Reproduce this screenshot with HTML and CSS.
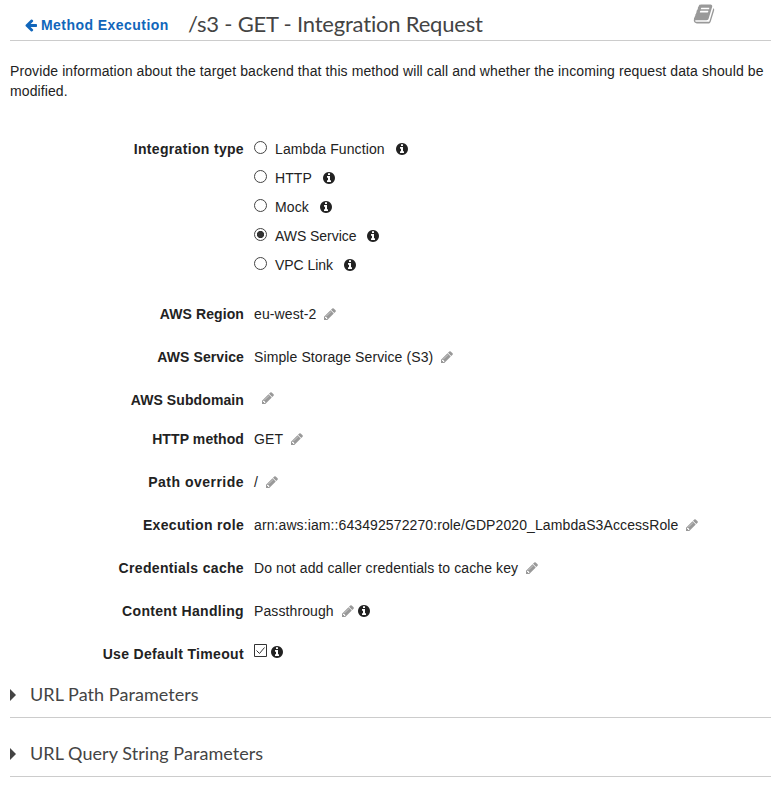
FILE: index.html
```html
<!DOCTYPE html>
<html lang="en">
<head>
<meta charset="utf-8">
<title>Integration Request</title>
<link rel="stylesheet" href="styles.css">
</head>
<body>
<svg class="sprite" aria-hidden="true">
  <symbol id="arrow" viewBox="0 0 1792 1792"><path d="M1664 896v128q0 53-32.5 90.5t-84.5 37.5h-704l293 294q38 36 38 90t-38 90l-75 76q-37 37-90 37-52 0-91-37l-651-652q-37-37-37-90 0-52 37-91l651-650q38-38 91-38 52 0 90 38l75 74q38 38 38 91t-38 91l-293 293h704q52 0 84.5 37.5t32.5 90.5z"/></symbol>
  <symbol id="pencil" viewBox="0 0 1792 1792"><path d="M491 1536l91-91-235-235-91 91v107h128v128h107zm523-928q0-22-22-22-10 0-17 7l-542 542q-7 7-7 17 0 22 22 22 10 0 17-7l542-542q7-7 7-17zm-54-192l416 416-832 832h-416v-416zm683 96q0 53-37 90l-166 166-416-416 166-165q36-38 90-38 53 0 91 38l235 234q37 39 37 91z"/></symbol>
  <symbol id="info" viewBox="0 0 1792 1792"><path d="M1152 1376v-160q0-14-9-23t-23-9h-96v-512q0-14-9-23t-23-9h-320q-14 0-23 9t-9 23v160q0 14 9 23t23 9h96v320h-96q-14 0-23 9t-9 23v160q0 14 9 23t23 9h448q14 0 23-9t9-23zm-128-896v-160q0-14-9-23t-23-9h-192q-14 0-23 9t-9 23v160q0 14 9 23t23 9h192q14 0 23-9t9-23zm640 416q0 209-103 385.5t-279.5 279.5-385.5 103-385.5-103-279.5-279.5-103-385.5 103-385.5 279.5-279.5 385.5-103 385.5 103 279.5 279.5 103 385.5z"/></symbol>
  <symbol id="book" viewBox="0 0 1792 1792"><path d="M1703 478q40 57 18 129l-275 906q-19 64-76.5 107.5t-122.5 43.5h-923q-77 0-148.5-53.5t-99.5-131.5q-24-67-2-127 0-4 3-27t4-37q1-8-3-21.5t-3-19.5q2-11 8-21t16.5-23.5 16.5-23.5q23-38 45-91.5t30-91.5q3-10 .5-30t-.5-28q3-11 17-28t17-23q21-36 42-92t25-90q1-9-2.5-32t.5-28q4-13 22-30.5t22-22.5q19-26 42.5-84.5t27.5-96.5q1-8-3-25.5t-2-26.5q2-8 9-18t18-23 17-21q8-12 16.5-30.5t15-35 16-36 19.5-32 26.5-23.5 36-11.5 47.5 5.5l-1 3q38-9 51-9h761q74 0 114 56t18 130l-274 906q-36 119-71.5 153.5t-128.5 34.5h-869q-27 0-38 15-11 16-1 43 24 70 144 70h923q29 0 56-15.5t35-41.5l300-987q7-22 5-57 38 15 59 43zm-1064 2q-4 13 2 22.5t20 9.5h608q13 0 25.5-9.5t16.5-22.5l21-64q4-13-2-22.5t-20-9.5h-608q-13 0-25.5 9.5t-16.5 22.5zm-83 256q-4 13 2 22.5t20 9.5h608q13 0 25.5-9.5t16.5-22.5l21-64q4-13-2-22.5t-20-9.5h-608q-13 0-25.5 9.5t-16.5 22.5z"/></symbol>
</svg>
<header class="header">
  <a class="back"><svg class="icon"><use href="#arrow"/></svg><span>Method Execution</span></a>
  <h1 class="title">/s3 - GET - Integration Request</h1>
  <svg class="book"><use href="#book"/></svg>
</header>
<p class="intro">Provide information about the target backend that this method will call and whether the incoming request data should be modified.</p>
<main class="form">
  <div class="row row-types">
    <span class="label">Integration type</span>
    <div class="types">
      <div class="type"><i class="radio"></i><span>Lambda Function</span><svg class="icon info"><use href="#info"/></svg></div>
      <div class="type"><i class="radio"></i><span>HTTP</span><svg class="icon info"><use href="#info"/></svg></div>
      <div class="type"><i class="radio"></i><span>Mock</span><svg class="icon info"><use href="#info"/></svg></div>
      <div class="type"><i class="radio checked"></i><span class="caps">AWS Service</span><svg class="icon info"><use href="#info"/></svg></div>
      <div class="type"><i class="radio"></i><span class="caps">VPC Link</span><svg class="icon info"><use href="#info"/></svg></div>
    </div>
  </div>
  <div class="row"><span class="label tight">AWS Region</span><div class="value"><span>eu-west-2</span><svg class="icon pencil"><use href="#pencil"/></svg></div></div>
  <div class="row"><span class="label tight">AWS Service</span><div class="value"><span>Simple Storage Service (S3)</span><svg class="icon pencil"><use href="#pencil"/></svg></div></div>
  <div class="row row-empty"><span class="label tight">AWS Subdomain</span><div class="value"><svg class="icon pencil"><use href="#pencil"/></svg></div></div>
  <div class="row"><span class="label tight">HTTP method</span><div class="value"><span>GET</span><svg class="icon pencil"><use href="#pencil"/></svg></div></div>
  <div class="row"><span class="label wide">Path override</span><div class="value"><span>/</span><svg class="icon pencil"><use href="#pencil"/></svg></div></div>
  <div class="row"><span class="label">Execution role</span><div class="value"><span>arn:aws:iam::643492572270:role/GDP2020_LambdaS3AccessRole</span><svg class="icon pencil"><use href="#pencil"/></svg></div></div>
  <div class="row"><span class="label">Credentials cache</span><div class="value"><span>Do not add caller credentials to cache key</span><svg class="icon pencil"><use href="#pencil"/></svg></div></div>
  <div class="row"><span class="label">Content Handling</span><div class="value"><span>Passthrough</span><svg class="icon pencil"><use href="#pencil"/></svg><svg class="icon"><use href="#info"/></svg></div></div>
  <div class="row row-check"><span class="label">Use Default Timeout</span><div class="value"><svg class="checkbox" viewBox="0 0 13 13"><path d="M.5 .5h12v12H.5zM2.5 6.5l3 3 5-6"/></svg><svg class="icon"><use href="#info"/></svg></div></div>
</main>
<section class="section"><svg class="caret" viewBox="0 0 6 12"><path d="M0 0l6 6-6 6z"/></svg><h2>URL Path Parameters</h2></section>
<section class="section"><svg class="caret" viewBox="0 0 6 12"><path d="M0 0l6 6-6 6z"/></svg><h2>URL Query String Parameters</h2></section>
</body>
</html>
```
FILE: styles.css
```css
* { box-sizing: border-box; }
body {
  margin: 0;
  padding: 0 7px 0 10px;
  background: #fff;
  color: #222;
  font: 14px/20px "Liberation Sans", Arial, sans-serif;
  letter-spacing: 0.1px;
}
.sprite { display: none; }
svg { flex: none; fill: currentColor; }
.header {
  display: flex;
  align-items: flex-start;
  height: 41px;
  border-bottom: 1px solid #ccc;
}
.back {
  display: flex;
  align-items: center;
  gap: 3px;
  width: 149px;
  margin: 15px 15px 0 14px;
  color: #1166bb;
  font-weight: bold;
  letter-spacing: 0.45px;
  white-space: nowrap;
}
.icon { width: 14px; height: 14px; }
.title {
  margin: 10px 0 0;
  color: #444;
  font: 22px/28px Lato, sans-serif;
  letter-spacing: -0.2px;
  white-space: nowrap;
}
.book {
  width: 22px;
  height: 22px;
  margin: 3px 56px 0 auto;
  color: #999;
}
.intro { margin: 20px 0 38px; }
.row {
  display: grid;
  grid-template-columns: 234px 1fr;
  column-gap: 10px;
  height: 43px;
}
.row-types { height: 165px; }
.row-empty { height: 39px; }
.row-empty .value { margin-top: -2px; }
.label {
  text-align: right;
  font-weight: bold;
  letter-spacing: 0.33px;
}
.tight { letter-spacing: 0.1px; }
.wide { letter-spacing: 0.48px; }
.type {
  display: flex;
  align-items: center;
  height: 20px;
  margin-bottom: 9px;
}
.radio {
  width: 13px;
  height: 13px;
  margin: 0 8px 3px 0;
  border: 1px solid #444;
  border-radius: 50%;
}
.checked { background: radial-gradient(circle, #333 3.2px, transparent 4px); }
.caps { letter-spacing: -0.05px; }
.info { margin-left: 10px; }
.value {
  display: flex;
  align-items: center;
  height: 20px;
}
.pencil { margin-left: 7px; margin-right: 2px; color: #999; }
.row-check { height: 41px; }
.row-check .value { margin-top: -2px; }
.checkbox {
  width: 13px;
  height: 13px;
  margin: 0 3px 3px 0;
  fill: none;
  stroke: #333;
}
.section {
  display: flex;
  align-items: center;
  height: 33px;
  margin-bottom: 26px;
  padding-bottom: 12px;
  border-bottom: 1px solid #ccc;
  color: #444;
}
.section h2 {
  margin: -2px 0 0;
  font: 18px/24px Lato, sans-serif;
  letter-spacing: 0.06px;
}
.caret { width: 6px; height: 12px; margin-right: 14px; }
```
